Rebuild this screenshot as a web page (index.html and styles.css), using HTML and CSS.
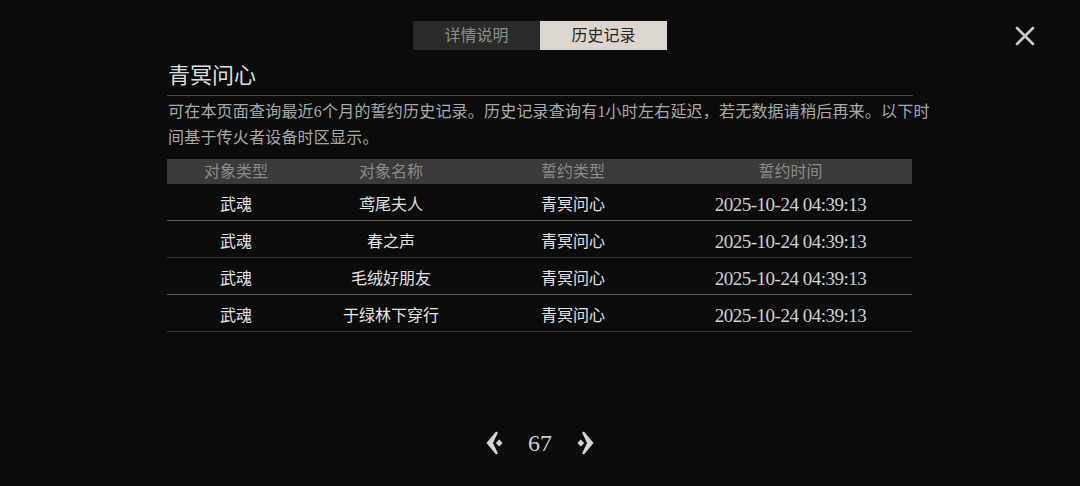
FILE: index.html
```html
<!DOCTYPE html>
<html lang="zh-CN">
<head>
    <meta charset="UTF-8">
    <meta name="viewport" content="width=device-width, initial-scale=1.0">
    <title>誓约历史记录</title>
    <link rel="stylesheet" href="styles.css">
</head>
<body>
    <div class="page">
        <div class="topbar">
            <div></div>
            <div class="tabs">
                <div class="tab">详情说明</div>
                <div class="tab active">历史记录</div>
            </div>
            <div class="close-wrap">
                <svg class="close" width="20" height="20" viewBox="0 0 20 20">
                    <path d="M2 2 L18 18 M18 2 L2 18" stroke="#c9c9c9" stroke-width="2.6" stroke-linecap="round"/>
                </svg>
            </div>
        </div>

        <div class="content">
            <div class="title">青冥问心</div>
            <div class="desc">可在本页面查询最近6个月的誓约历史记录。历史记录查询有1小时左右延迟，若无数据请稍后再来。以下时间基于传火者设备时区显示。</div>

            <div class="table">
                <div class="row head">
                    <div class="c1">对象类型</div>
                    <div class="c2">对象名称</div>
                    <div class="c3">誓约类型</div>
                    <div class="c4">誓约时间</div>
                </div>
                <div class="row odd">
                    <div class="c1">武魂</div>
                    <div class="c2">鸢尾夫人</div>
                    <div class="c3">青冥问心</div>
                    <div class="c4 date">2025-10-24 04:39:13</div>
                </div>
                <div class="row">
                    <div class="c1">武魂</div>
                    <div class="c2">春之声</div>
                    <div class="c3">青冥问心</div>
                    <div class="c4 date">2025-10-24 04:39:13</div>
                </div>
                <div class="row odd">
                    <div class="c1">武魂</div>
                    <div class="c2">毛绒好朋友</div>
                    <div class="c3">青冥问心</div>
                    <div class="c4 date">2025-10-24 04:39:13</div>
                </div>
                <div class="row">
                    <div class="c1">武魂</div>
                    <div class="c2">于绿林下穿行</div>
                    <div class="c3">青冥问心</div>
                    <div class="c4 date">2025-10-24 04:39:13</div>
                </div>
            </div>
        </div>

        <div class="pager">
            <svg class="arrow" width="18" height="24" viewBox="0 0 18 24">
                <polygon points="0.5,12 10,0.5 12,1.5 7,12 12,22.5 10,23.5" fill="#d4d4d4"/>
                <polygon points="13.2,8.6 16.6,12 13.2,15.4 9.8,12" fill="#d4d4d4"/>
            </svg>
            <span class="page-num">67</span>
            <svg class="arrow" width="18" height="24" viewBox="0 0 18 24">
                <polygon points="17.5,12 8,0.5 6,1.5 11,12 6,22.5 8,23.5" fill="#d4d4d4"/>
                <polygon points="4.8,8.6 8.2,12 4.8,15.4 1.4,12" fill="#d4d4d4"/>
            </svg>
        </div>
    </div>
</body>
</html>
```

FILE: styles.css
```css
body {
    margin: 0;
    background-color: #0b0b0b;
    font-family: "Liberation Serif", "Noto Sans CJK SC", serif;
    color: #ddd;
}
.page {
    width: 1080px;
    height: 486px;
    overflow: hidden;
}
.topbar {
    display: grid;
    grid-template-columns: 1fr auto 1fr;
    padding-top: 21px;
}
.tabs {
    display: flex;
}
.tab {
    width: 127px;
    height: 29px;
    line-height: 29px;
    text-align: center;
    font-size: 16px;
    background-color: #2a2a2a;
    color: #8c8c8c;
}
.tab.active {
    background-color: #dcd6d0;
    color: #262626;
}
.close-wrap {
    display: flex;
    justify-content: flex-end;
    padding-right: 45px;
    padding-top: 5px;
}
.content {
    margin-left: 167px;
    width: 765px;
}
.title {
    width: 745px;
    margin-top: 11px;
    font-size: 22px;
    line-height: 30px;
    padding-left: 1px;
    padding-bottom: 4px;
    border-bottom: 1px solid #4a4a4a;
    color: #dedede;
}
.desc {
    margin-top: 3px;
    font-size: 16px;
    line-height: 26px;
    letter-spacing: 0.2px;
    color: #a9a9a9;
    padding-left: 1px;
}
.table {
    width: 745px;
    margin-top: 8px;
}
.row {
    display: flex;
    height: 37px;
    padding-top: 8px;
    box-sizing: border-box;
    line-height: 26px;
    font-size: 16px;
    text-align: center;
    color: #e2e2e2;
    border-bottom: 1px solid #363636;
}
.row.odd {
    border-bottom-color: #5d5c53;
}
.row.head {
    height: 25px;
    padding-top: 0;
    line-height: 25px;
    background-color: #3a3a3a;
    color: #8a8a8a;
    border-bottom: none;
}
.c1 { width: 138px; }
.c2 { width: 172px; }
.c3 { width: 192px; }
.c4 { width: 243px; }
.date {
    color: #cfcfcf;
    font-size: 19px;
    letter-spacing: -0.5px;
}
.pager {
    display: flex;
    justify-content: center;
    align-items: center;
    gap: 24px;
    margin-top: 96px;
    height: 30px;
}
.page-num {
    font-size: 24px;
    color: #d0d0d0;
}
.arrow {
    display: block;
}
```
